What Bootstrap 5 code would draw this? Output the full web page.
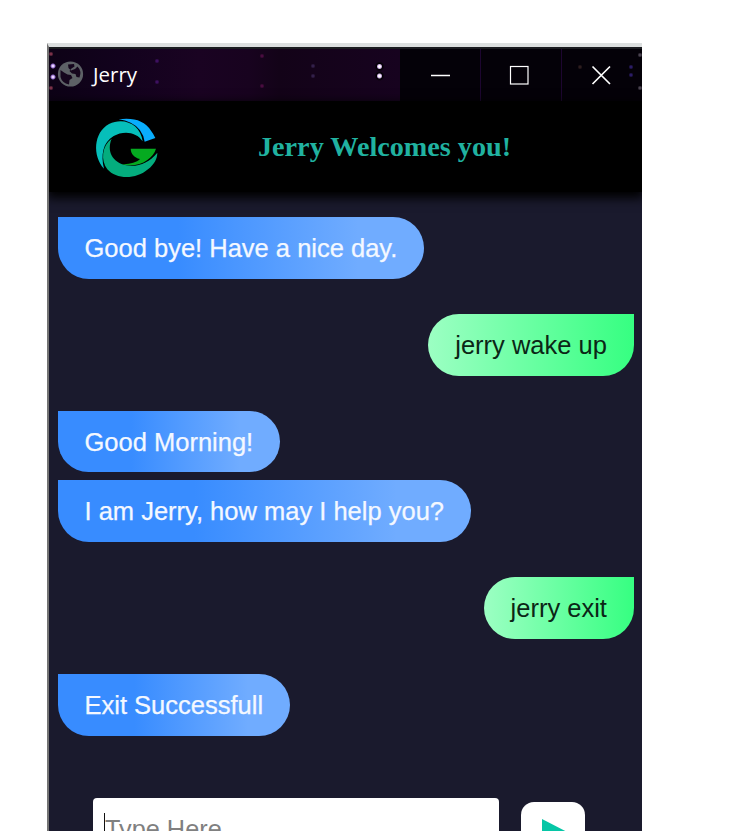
<!DOCTYPE html>
<html lang="en">
<head>
<meta charset="utf-8">
<title>Jerry</title>
<link href="https://cdn.jsdelivr.net/npm/bootstrap@5.3.0/dist/css/bootstrap.min.css" rel="stylesheet">
<style>
body{background:#fff;height:831px;padding:43px 0 0 47px;font-family:"Liberation Sans",Arial,sans-serif}
.win{width:595px;height:788px;background:#1a1a2d;border-top:4px solid #dcdfdf;border-left:2px solid #737373}
.titlebar{height:54px;border-top:2px solid #1b1c20;color:#fff;padding-left:8px;
background:
radial-gradient(circle at 4px 17px,#e9d5ff 1px,#8a62c4 2px,transparent 3px),
radial-gradient(circle at 4px 28px,#e9d5ff 1px,#8a62c4 2px,transparent 3px),
radial-gradient(circle at 2px 5px,#7a3148 1px,transparent 2.5px),
radial-gradient(circle at 2px 39px,#7a3148 1px,transparent 2.5px),
radial-gradient(circle at 108px 12px,#3d1060 1px,transparent 2.5px),
radial-gradient(circle at 108px 33px,#3d1060 1px,transparent 2.5px),
radial-gradient(circle at 213px 7px,#4a0c40 1px,transparent 2.5px),
radial-gradient(circle at 213px 37px,#4a0c40 1px,transparent 2.5px),
radial-gradient(circle at 264px 17px,#33204a 1px,transparent 2.5px),
radial-gradient(circle at 264px 27px,#33204a 1px,transparent 2.5px),
radial-gradient(circle at 330.5px 17.5px,#fff 1px,#c9a6e0 2px,#000 3px,transparent 5px),
radial-gradient(circle at 330.5px 27px,#fff 1px,#c9a6e0 2px,#000 3px,transparent 5px),
linear-gradient(90deg,#0d0216 0,#12021d 70px,#1a0322 150px,#18031f 200px,#130318 230px,#17031f 350px)}
.app-name{font:20.5px "Open Sans","Segoe UI",sans-serif;line-height:51px;margin-left:9px}
.win-btn{width:81px;height:52px;background:#040108;border-right:1px solid #1d0630}
.win-btn:last-child{width:80px;border:0;
background:radial-gradient(circle at 69px 18px,#2b1c66 1px,transparent 2.5px),
radial-gradient(circle at 69px 26px,#2b1c66 1px,transparent 2.5px),
radial-gradient(circle at 78px 6px,#4a4350 1px,transparent 2.5px),
radial-gradient(circle at 78px 39px,#4a4350 1px,transparent 2.5px),
radial-gradient(circle at 18px 18px,#2d1d1e 1px,transparent 2.5px),#040108}
.app-head{height:91px;background:#000;box-shadow:0 4px 10px 2px #000;padding:4px 0 0 31px}
.head-title{font:bold 28.2px/36px "Liberation Serif","Times New Roman",serif;color:#20b2a0;margin:24px 0 0 78px;white-space:nowrap}
.chat{padding:25px 8.5px 0 8.5px}
.bubble{height:61.8px;line-height:63.5px;font-size:25.5px;-webkit-text-stroke:.25px currentColor;padding:0 26.6px 0 27px;white-space:nowrap}
.bot{align-self:flex-start;color:#f4f8ff;background:linear-gradient(90deg,#388cff 0,#388cff 33%,#70acff 82%);border-radius:0 31px 31px 31px}
.me{align-self:flex-end;color:#0b2616;-webkit-text-stroke:0;line-height:62.5px;background:linear-gradient(90deg,#9cffc3,#36ff81);border-radius:31px 0 31px 31px;margin:35px 0}
.composer{padding:62px 0 0 44px}
.entry{width:406px;height:60px;border:0;border-radius:4px;font-size:25.3px;padding:2px 11px 0;color:#808080;line-height:58px}
.caret{width:1px;height:31px;background:#111}
.send{width:64px;height:62px;border:0;border-radius:13px;background:#fff;margin:4px 0 0 22px}
</style>
</head>
<body class="overflow-hidden">
<div class="win overflow-hidden d-flex flex-column">
  <div class="titlebar d-flex align-items-start flex-shrink-0">
    <svg width="27" height="50" viewBox="0 0 27 50"><circle cx="13.500" cy="25" r="12.600" fill="#5d6166"/><path d="M3.500 21L7 23.500L10.500 25.500L14 26L15.500 29L12.500 31L12 35.500Q5 34 3.500 28Z" fill="#15061d"/><path d="M11 15.500L17 15L17.500 17.500L14.500 19.500L12.500 22L15 24.500L18.500 25L19.500 28L22.500 28.500Q25 22 20.500 17.500L18 20L14 21.500L11.500 19Z" fill="#15061d"/></svg>
    <div class="app-name">Jerry</div>
    <div class="d-flex ms-auto">
      <div class="win-btn"><svg width="80" height="52" stroke="#fff" stroke-width="1.5"><path d="M31 26.5h19"/></svg></div>
      <div class="win-btn"><svg width="80" height="52" stroke="#fff" stroke-width="1.2" fill="none"><rect x="29.500" y="17.500" width="17.500" height="17.500"/></svg></div>
      <div class="win-btn"><svg width="80" height="52" stroke="#fff" stroke-width="1.7"><path d="M30.500 17.500l17.500 17.500M48 17.500L30.500 35"/></svg></div>
    </div>
  </div>
  <div class="app-head d-flex align-items-start flex-shrink-0">
    <svg class="flex-shrink-0" width="100" height="85" viewBox="0 0 300 255">
      <path d="M116 43Q185 34 212 76Q221 88 226 99L194 110Q188 70 152 53Q136 45 116 43Z" fill="#09adfd"/>
      <path d="M72 191C37 153 40 83 87 57C133 35 182 59 188 109C170 80 130 76 101 93C68 112 62 151 72 191Z" fill="#06bfba"/>
      <path d="M95 101C65 123 62 166 82 193C109 224 168 224 204 193C224 177 232 160 232 143C207 174 173 187 139 181C98 172 79 139 95 101Z" fill="#04ad7e"/>
      <path d="M152 131H228C219 163 173 192 125 177C149 178 169 173 180 162C162 157 153 147 152 131Z" fill="#05aa20"/>
    </svg>
    <div class="head-title">Jerry Welcomes you!</div>
  </div>
  <div class="chat d-flex flex-column flex-shrink-0">
    <div class="bubble bot">Good bye! Have a nice day.</div>
    <div class="bubble me">jerry wake up</div>
    <div class="bubble bot mb-2">Good Morning!</div>
    <div class="bubble bot">I am Jerry, how may I help you?</div>
    <div class="bubble me">jerry exit</div>
    <div class="bubble bot">Exit Successfull</div>
  </div>
  <div class="composer d-flex align-items-start flex-shrink-0">
    <div class="entry bg-white d-flex align-items-center"><span class="caret"></span><span>Type Here...</span></div>
    <button class="send p-0" type="button" aria-label="Send"><svg class="d-block" width="64" height="62"><path d="M21 17L52 33L21 49Z" fill="#06c6a6"/></svg></button>
  </div>
</div>
<script src="https://cdn.jsdelivr.net/npm/bootstrap@5.3.0/dist/js/bootstrap.bundle.min.js"></script>
</body>
</html>
